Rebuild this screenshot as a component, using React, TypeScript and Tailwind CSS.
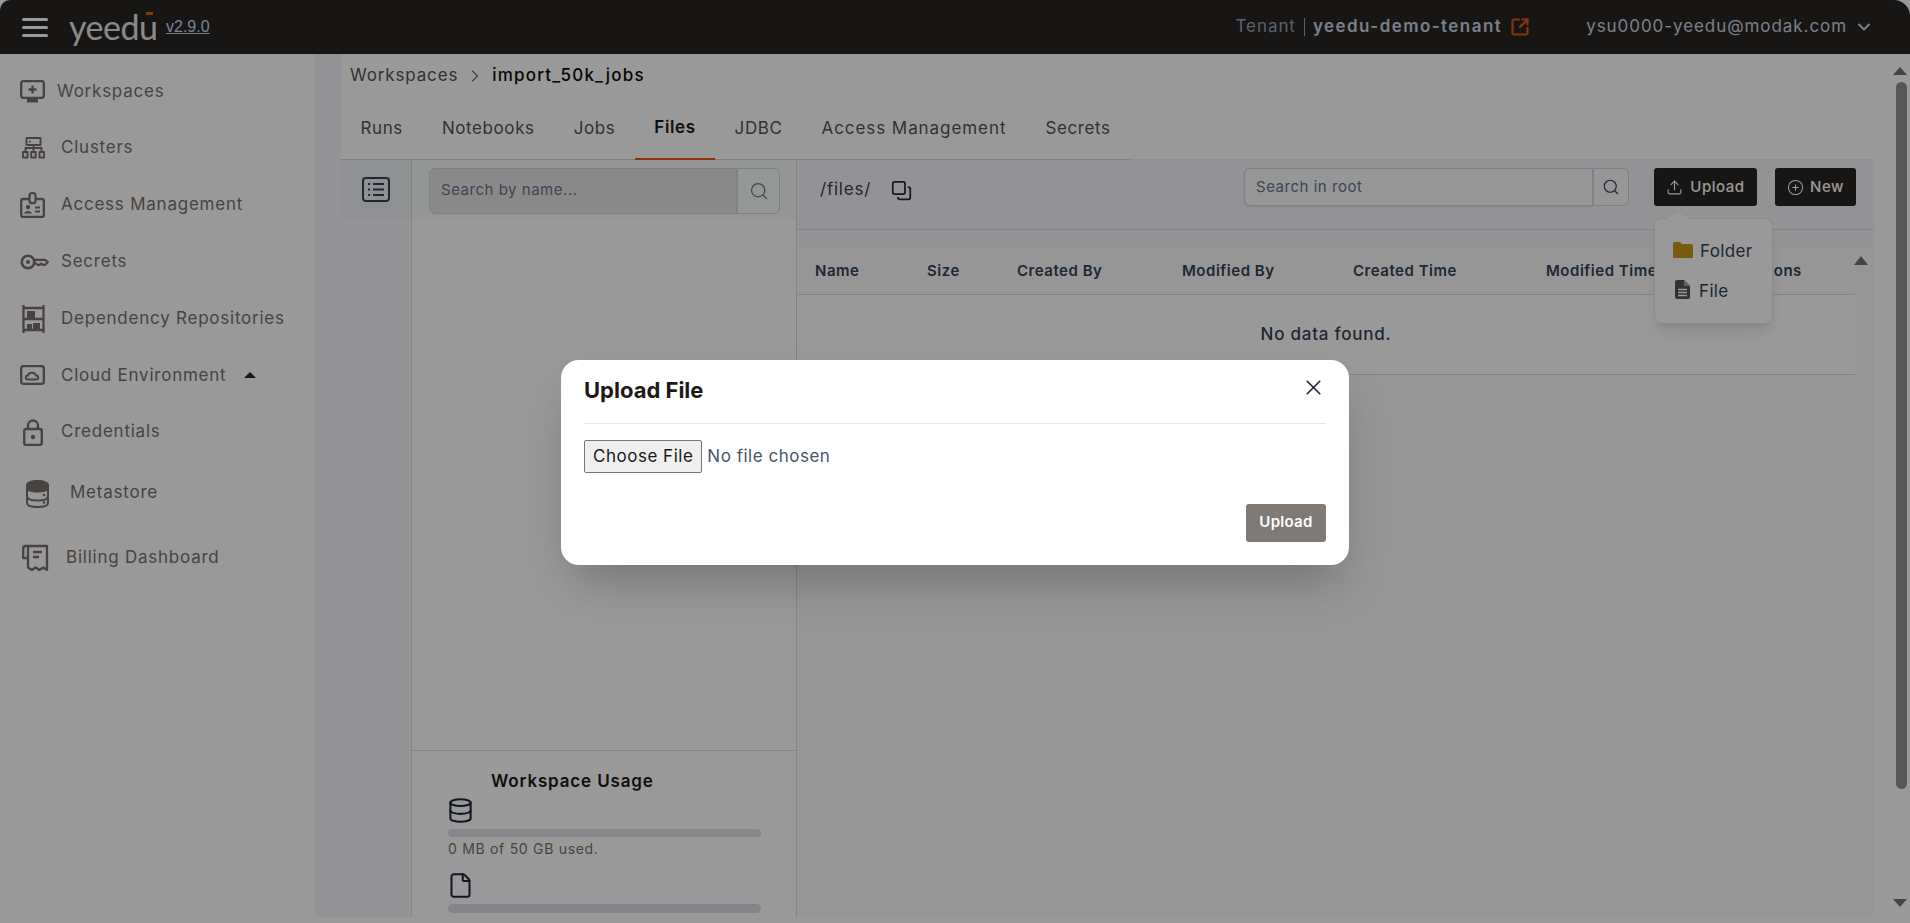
import React from "react";
import { ChevronDown, ChevronRight, Search, Upload, CirclePlus, X, Copy, SquareArrowOutUpRight, Database, File as FileIcon } from "lucide-react";

const S = "#78716c";

function Ic({ w, h, vb, children }: { w: number; h: number; vb: string; children: React.ReactNode }) {
  return (
    <svg width={w} height={h} viewBox={vb} fill="none" stroke={S} strokeWidth={2.3} strokeLinejoin="round" className="shrink-0">
      {children}
    </svg>
  );
}

const icons = {
  workspaces: (
    <Ic w={25} h={23} vb="0 0 25 23">
      <rect x="1.2" y="1.2" width="22.600" height="16.600" rx="2" />
      <path d="M12.5 5.500v8M8.500 9.500h8" />
      <rect x="7" y="19" width="11" height="3.500" fill={S} stroke="none" />
    </Ic>
  ),
  clusters: (
    <Ic w={23} h={22} vb="0 0 23 22">
      <g strokeWidth={1.9}>
        <rect x="4.500" y="1" width="14" height="7" />
        <path d="M11.500 8v6M3.500 14v-3h16v3" />
        <rect x="1" y="15" width="4.500" height="5.500" />
        <rect x="9.200" y="15" width="4.500" height="5.500" />
        <rect x="17.500" y="15" width="4.500" height="5.500" />
      </g>
      <circle cx="8" cy="4.500" r="1" fill={S} stroke="none" />
    </Ic>
  ),
  access: (
    <Ic w={25} h={26} vb="0 0 25 26">
      <rect x="1.200" y="7" width="22.600" height="18" rx="2" />
      <rect x="9.500" y="1.200" width="6" height="10" rx="2.500" fill="#fff" />
      <circle cx="8" cy="15" r="2.200" fill={S} stroke="none" />
      <path d="M4 21.500c.5-3.500 7.500-3.500 8 0z" fill={S} stroke="none" />
      <path d="M15 15.500h5M15 19.500h5" strokeWidth={1.8} />
    </Ic>
  ),
  key: (
    <Ic w={29} h={16} vb="0 0 29 16">
      <circle cx="8" cy="8" r="6.300" strokeWidth={2.600} />
      <circle cx="8" cy="8" r="2" fill={S} stroke="none" />
      <path d="M14.500 5.800H25l2.800 2.400-2.800 2.600h-2.400l-1.500-1.300-1.500 1.300h-2l-1.600-1.300h-2" strokeWidth={2.200} />
    </Ic>
  ),
  deps: (
    <Ic w={23} h={28} vb="0 0 23 28">
      <path d="M1.500 0v28M21.500 0v28M1.500 3h20M1.500 14h20M1.500 25h20" />
      <rect x="5" y="6" width="8" height="8" fill={S} stroke="none" />
      <rect x="11" y="18" width="7" height="7" fill={S} stroke="none" />
      <rect x="5" y="19" width="5" height="6" fill={S} stroke="none" />
    </Ic>
  ),
  cloud: (
    <Ic w={25} h={20} vb="0 0 25 20">
      <rect x="1.200" y="1.200" width="22.600" height="17.600" rx="2" />
      <path d="M8 14.500c-3 0-3-4 0-4 .5-3.500 7-4 8 0 3 0 3 4 0 4z" strokeWidth={1.9} />
    </Ic>
  ),
  lock: (
    <Ic w={20} h={27} vb="0 0 20 27">
      <rect x="1.200" y="10" width="17.600" height="16" rx="2" />
      <path d="M5 10V6.500a5 5 0 0 1 10 0V10" />
      <circle cx="10" cy="18" r="2.200" fill={S} stroke="none" />
    </Ic>
  ),
  meta: (
    <svg width={25} height={29} viewBox="0 0 25 29" className="shrink-0">
      <path d="M1 6c0-3 5-5 11.500-5S24 3 24 6v3c0 3-5 4.500-11.500 4.500S1 12 1 9z" fill={S} />
      <path d="M2 10v7c0 3 4.500 4.500 10.500 4.500S23 20 23 17v-7M2 18v6c0 2.500 4.500 4 10.500 4S23 26.500 23 24v-6" fill="none" stroke={S} strokeWidth={2} />
      <circle cx="19" cy="16" r="1.300" fill={S} />
      <circle cx="19" cy="23.500" r="1.300" fill={S} />
    </svg>
  ),
  billing: (
    <Ic w={27} h={27} vb="0 0 27 27">
      <path d="M6 2h19v24l-3.800-2.500-3.800 2.500-3.800-2.500-3.800 2.500L6 23.500z" />
      <path d="M6 2H3.500A2.500 2.500 0 0 0 1.200 4.500V14H6" />
      <path d="M11 8h9M11 13h6" />
    </Ic>
  ),
};

function NavItem({ icon, label, w = 41, h = "h-[56.8px]", extra }: { icon: React.ReactNode; label: string; w?: number; h?: string; extra?: React.ReactNode }) {
  return (
    <div className={`flex items-center pl-[20px] text-[17px] text-[#78716c] tracking-[0.045em] ${h}`}>
      <div style={{ width: w }} className="flex items-center">{icon}</div>
      <span>{label}</span>
      {extra}
    </div>
  );
}

const tabs = ["Runs", "Notebooks", "Jobs", "Files", "JDBC", "Access Management", "Secrets"];

const cols: [string, string][] = [
  ["Name", "w-[112px]"],
  ["Size", "w-[90px]"],
  ["Created By", "w-[165px]"],
  ["Modified By", "w-[171px]"],
  ["Created Time", "w-[193px]"],
  ["Modified Time", "w-[197px]"],
  ["Actions", "w-[90px]"],
];

export default function App() {
  return (
    <div className="relative h-[923px] w-[1910px] overflow-hidden bg-white font-['Inter',sans-serif] text-[#334155]">
      {/* header */}
      <header className="flex h-[54px] items-center rounded-tl-[10px] rounded-tr-[16px] bg-[#292524]">
        <div className="ml-[22px] flex w-[26px] flex-col gap-[5px]">
          <span className="h-[3px] rounded bg-white" />
          <span className="h-[3px] rounded bg-white" />
          <span className="h-[3px] rounded bg-white" />
        </div>
        <div className="relative ml-[21px] w-[97px] font-['Lato',sans-serif] text-[34px] leading-none font-normal tracking-[-0.015em] text-[#e7e5e4]">
          yeedu
          <span className="absolute top-[2px] left-[77px] h-[3px] w-[7px] bg-[#ea580c]" />
        </div>
        <a className="font-['Liberation_Sans',sans-serif] text-[16px] text-[#c7dcf0] underline">v2.9.0</a>
        <div className="ml-auto flex items-center pr-[36px] text-[17px] tracking-[0.055em]">
          <span className="text-[#94a3b8]">Tenant</span>
          <span className="mx-[8px] h-[18px] w-px bg-[#94a3b8]" />
          <span className="font-semibold tracking-[0.085em] text-[#cbd5e1]">yeedu-demo-tenant</span>
          <SquareArrowOutUpRight size={20} strokeWidth={2.6} className="ml-[8px] text-[#ea580c]" />
          <span className="ml-[56px] text-[#cbd5e1]">ysu0000-yeedu@modak.com</span>
          <ChevronDown size={20} strokeWidth={2.5} className="ml-[7px] text-[#cbd5e1]" />
        </div>
      </header>

      <div className="flex h-[869px]">
        {/* sidebar */}
        <aside className="w-[315px] shrink-0 bg-white pt-[9px]">
          <NavItem icon={icons.workspaces} label="Workspaces" w={37} />
          <NavItem icon={<div className="pl-[2px]">{icons.clusters}</div>} label="Clusters" />
          <NavItem icon={icons.access} label="Access Management" />
          <NavItem icon={icons.key} label="Secrets" />
          <NavItem icon={<div className="pl-[2px]">{icons.deps}</div>} label="Dependency Repositories" />
          <NavItem
            icon={icons.cloud}
            label="Cloud Environment"
            extra={<span className="ml-[18px] h-0 w-0 border-x-[6px] border-b-[6px] border-x-transparent border-b-[#1e293b]" />}
          />
          <NavItem icon={<div className="pl-[3px]">{icons.lock}</div>} label="Credentials" />
          <NavItem icon={<div className="pl-[5px]">{icons.meta}</div>} label="Metastore" w={50} h="h-[65px]" />
          <NavItem icon={<div className="pl-[2px]">{icons.billing}</div>} label="Billing Dashboard" w={46} h="h-[64px]" />
        </aside>

        {/* main */}
        <main className="flex h-[863px] w-[1559px] shrink-0 bg-[#f5f6f8] pl-[26px]">
          <div className="flex w-[1533px] flex-col bg-white">
            <div className="flex h-[44px] items-center pl-[9px] text-[17px] tracking-[0.05em]">
              <span className="text-[#57534e]">Workspaces</span>
              <ChevronRight size={20} strokeWidth={1.5} className="mx-[7px] text-[#78716c]" />
              <span className="font-medium tracking-[0.07em] text-[#0c0a09]">import_50k_jobs</span>
            </div>
            <div className="h-[62px] border-b border-[#eceef1]">
              <div className="flex h-[62px] w-[789px] border-b border-[#cbd5e1]">
                {tabs.map((t) => (
                  <div
                    key={t}
                    className={`flex items-center px-[19.500px] text-[17px] whitespace-nowrap ${t === "Access Management" ? "tracking-[0.055em]" : "tracking-[0.035em]"} ${t === "Files" ? "-mb-px border-b-2 border-[#ea580c] font-semibold text-[#1c1917]" : "text-[#57534e]"}`}
                  >
                    {t}
                  </div>
                ))}
              </div>
            </div>

            <div className="flex min-h-0 flex-1">
              {/* rail */}
              <div className="w-[70px] shrink-0 bg-[#f5f6f8]">
                <div className="flex h-[59px] items-center justify-center bg-[#eef0f2]">
                  <svg width="28" height="25" viewBox="0 0 28 25" fill="none" stroke="#334155" strokeWidth="2">
                    <rect x="1" y="1" width="26" height="23" rx="3" />
                    <path d="M11 7h11M11 12.500h11M11 18h11" />
                    <path d="M6 7h2M6 12.500h2M6 18h2" />
                  </svg>
                </div>
              </div>

              {/* files column */}
              <div className="flex w-[386px] shrink-0 flex-col border-x border-[#d8dce2]">
                <div className="flex h-[59px] items-start bg-[#f7f8f9] pt-[8px] pl-[17px]">
                  <div className="flex h-[46px] w-[308px] items-center rounded-l-[6px] border border-[#cbd5e1] bg-[#e7e5e4] pb-[2px] pl-[11px] text-[15px] tracking-[0.035em] text-[#64748b]">
                    Search by name...
                  </div>
                  <div className="flex h-[46px] w-[43px] items-center justify-center rounded-r-[6px] border border-[#cbd5e1] bg-[#f9fafb]">
                    <Search size={20} strokeWidth={1.5} className="text-[#64748b]" />
                  </div>
                </div>
                <div className="flex-1" />
                <div className="h-[167px] border-t border-[#d8dce2] pl-[36px]">
                  <div className="mt-[19px] pl-[43px] text-[17px] leading-[22px] font-semibold tracking-[0.05em] text-[#1c1917]">Workspace Usage</div>
                  <Database size={27} strokeWidth={1.8} className="mt-[5px] -ml-[1px] text-[#1e293b]" />
                  <div className="mt-[5px] h-[8px] w-[313px] rounded-full bg-[#dcdfe4]" />
                  <div className="mt-[2px] text-[14px] leading-[20px] tracking-[0.05em] text-[#78716c]">0 MB of 50 GB used.</div>
                  <FileIcon size={27} strokeWidth={1.8} className="mt-[13px] -ml-[1px] text-[#1e293b]" />
                  <div className="mt-[5px] h-[9px] w-[313px] rounded-full bg-[#dcdfe4]" />
                </div>
              </div>

              {/* files content */}
              <div className="flex min-w-0 flex-1 flex-col bg-[#fbfbfc]">
                <div className="flex h-[70px] shrink-0 items-start border-b border-[#d8dce2] bg-[#f5f6f8] pt-[8px]">
                  <div className="flex h-[44px] items-center pl-[23px]">
                    <span className="text-[17px] tracking-[0.045em] text-[#334155]">/files/</span>
                    <Copy size={21} strokeWidth={2} className="ml-[20px] rotate-180 text-[#1e293b]" />
                  </div>
                  <div className="ml-auto flex items-center pr-[18px]">
                    <div className="flex h-[38px] w-[349px] items-center rounded-l-[6px] border border-[#cbd5e1] bg-[#fafafa] pl-[11px] text-[15px] tracking-[0.035em] text-[#64748b] shadow-sm">
                      Search in root
                    </div>
                    <div className="flex h-[38px] w-[36px] items-center justify-center rounded-r-[6px] border border-[#cbd5e1] bg-[#fafafa]">
                      <Search size={18} strokeWidth={1.5} className="text-[#334155]" />
                    </div>
                    <div className="relative ml-[25px]">
                      <button className="flex h-[38px] w-[103px] items-center justify-center gap-[7px] rounded-[3px] bg-[#292524] text-[15px] font-medium tracking-[0.035em] text-white">
                        <Upload size={17} strokeWidth={1.6} /> Upload
                      </button>
                      <div className="absolute top-[50px] left-0 z-10 flex h-[106px] w-[119px] flex-col justify-center gap-[14px] rounded-[8px] border border-[#e5e7eb] bg-white pt-[1px] pl-[18px] shadow-lg">
                        <span className="absolute -top-[7px] left-[12px] h-0 w-0 border-x-[11px] border-b-[7px] border-x-transparent border-b-white" />
                        <div className="flex items-center gap-[7px] text-[17px] tracking-[0.02em] text-[#334155]">
                          <svg width="20" height="16" viewBox="0 0 20 16" className="-mt-[3px]"><path d="M0 1.500A1.500 1.500 0 0 1 1.500 0H7l2 2h9.500A1.500 1.500 0 0 1 20 3.500v11a1.500 1.500 0 0 1-1.500 1.500h-17A1.500 1.500 0 0 1 0 14.500z" fill="#ca9a1c" /></svg>
                          Folder
                        </div>
                        <div className="flex items-center gap-[9px] pl-[2px] text-[17px] tracking-[0.02em] text-[#334155]">
                          <svg width="15" height="19" viewBox="0 0 15 19" className="-mt-[3px]"><path d="M2 0h7l6 6v11a2 2 0 0 1-2 2H2a2 2 0 0 1-2-2V2a2 2 0 0 1 2-2z" fill="#57534e" /><path d="M9 0v6h6" fill="#a8a29e" /><path d="M3 9.500h9M3 12.500h9M3 15.500h9" stroke="#fff" strokeWidth="1.300" /></svg>
                          File
                        </div>
                      </div>
                    </div>
                    <button className="ml-[18px] flex h-[38px] w-[81px] items-center justify-center gap-[6px] rounded-[3px] bg-[#292524] text-[15px] font-medium tracking-[0.035em] text-white">
                      <CirclePlus size={17} strokeWidth={1.5} /> New
                    </button>
                  </div>
                </div>
                <div className="h-[17px] shrink-0 bg-[#f5f6f8]" />
                <div className="flex">
                  <div className="w-[1058px] shrink-0">
                    <div className="flex h-[48px] items-center border-b border-[#d8dce2] bg-[#fbfbfc] pt-[2px] pl-[18px] text-[15px] font-semibold tracking-[0.035em] text-[#334155]">
                      {cols.map(([c, w]) => (
                        <div key={c} className={`shrink-0 whitespace-nowrap ${w}`}>{c}</div>
                      ))}
                    </div>
                    <div className="flex h-[80px] items-center justify-center border-b border-[#d8dce2] bg-white text-[17px] font-medium tracking-[0.045em] text-[#334155]">
                      No data found.
                    </div>
                  </div>
                  <div className="flex flex-1 justify-center pt-[9px]">
                    <span className="ml-[-8px] h-0 w-0 border-x-[7px] border-b-[9px] border-x-transparent border-b-[#78716c]" />
                  </div>
                </div>
              </div>
            </div>
          </div>
        </main>

        {/* page scrollbar */}
        <div className="flex w-[36px] flex-col items-end bg-white pr-[3px]">
          <span className="mt-[13px] h-0 w-0 border-x-[7px] border-b-[8px] border-x-transparent border-b-[#78716c]" />
          <span className="mt-[7px] h-[707px] w-[11px] rounded-full bg-[#8f8f8f]" />
          <span className="mt-[110px] h-0 w-0 border-x-[7px] border-t-[8px] border-x-transparent border-t-[#78716c]" />
        </div>
      </div>

      {/* modal */}
      <div className="absolute inset-0 z-20 flex items-center justify-center bg-black/40 pt-[1px]">
        <div className="h-[205px] w-[788px] rounded-[18px] bg-white px-[23px] shadow-2xl">
          <div className="flex h-[64px] items-center justify-between border-b border-[#e2e8f0] pb-[2px]">
            <span className="text-[22px] font-bold text-[#1c1917]">Upload File</span>
            <X size={25} strokeWidth={1.6} className="mb-[6px] text-[#1e293b]" />
          </div>
          <div className="mt-[16px] flex h-[34px] items-center">
            <input
              type="file"
              className="w-[400px] text-[17px] tracking-[0.03em] text-[#475569] file:mr-[5px] file:h-[33px] file:rounded-[2px] file:border file:border-[#767676] file:bg-[#efefef] file:px-[8px] file:text-[17px] file:text-[#1c1917]"
            />
          </div>
          <div className="mt-[30px] flex justify-end">
            <button className="h-[38px] w-[80px] rounded-[3px] bg-[#7f7a76] text-[15px] font-semibold tracking-[0.02em] text-white">Upload</button>
          </div>
        </div>
      </div>
    </div>
  );
}
